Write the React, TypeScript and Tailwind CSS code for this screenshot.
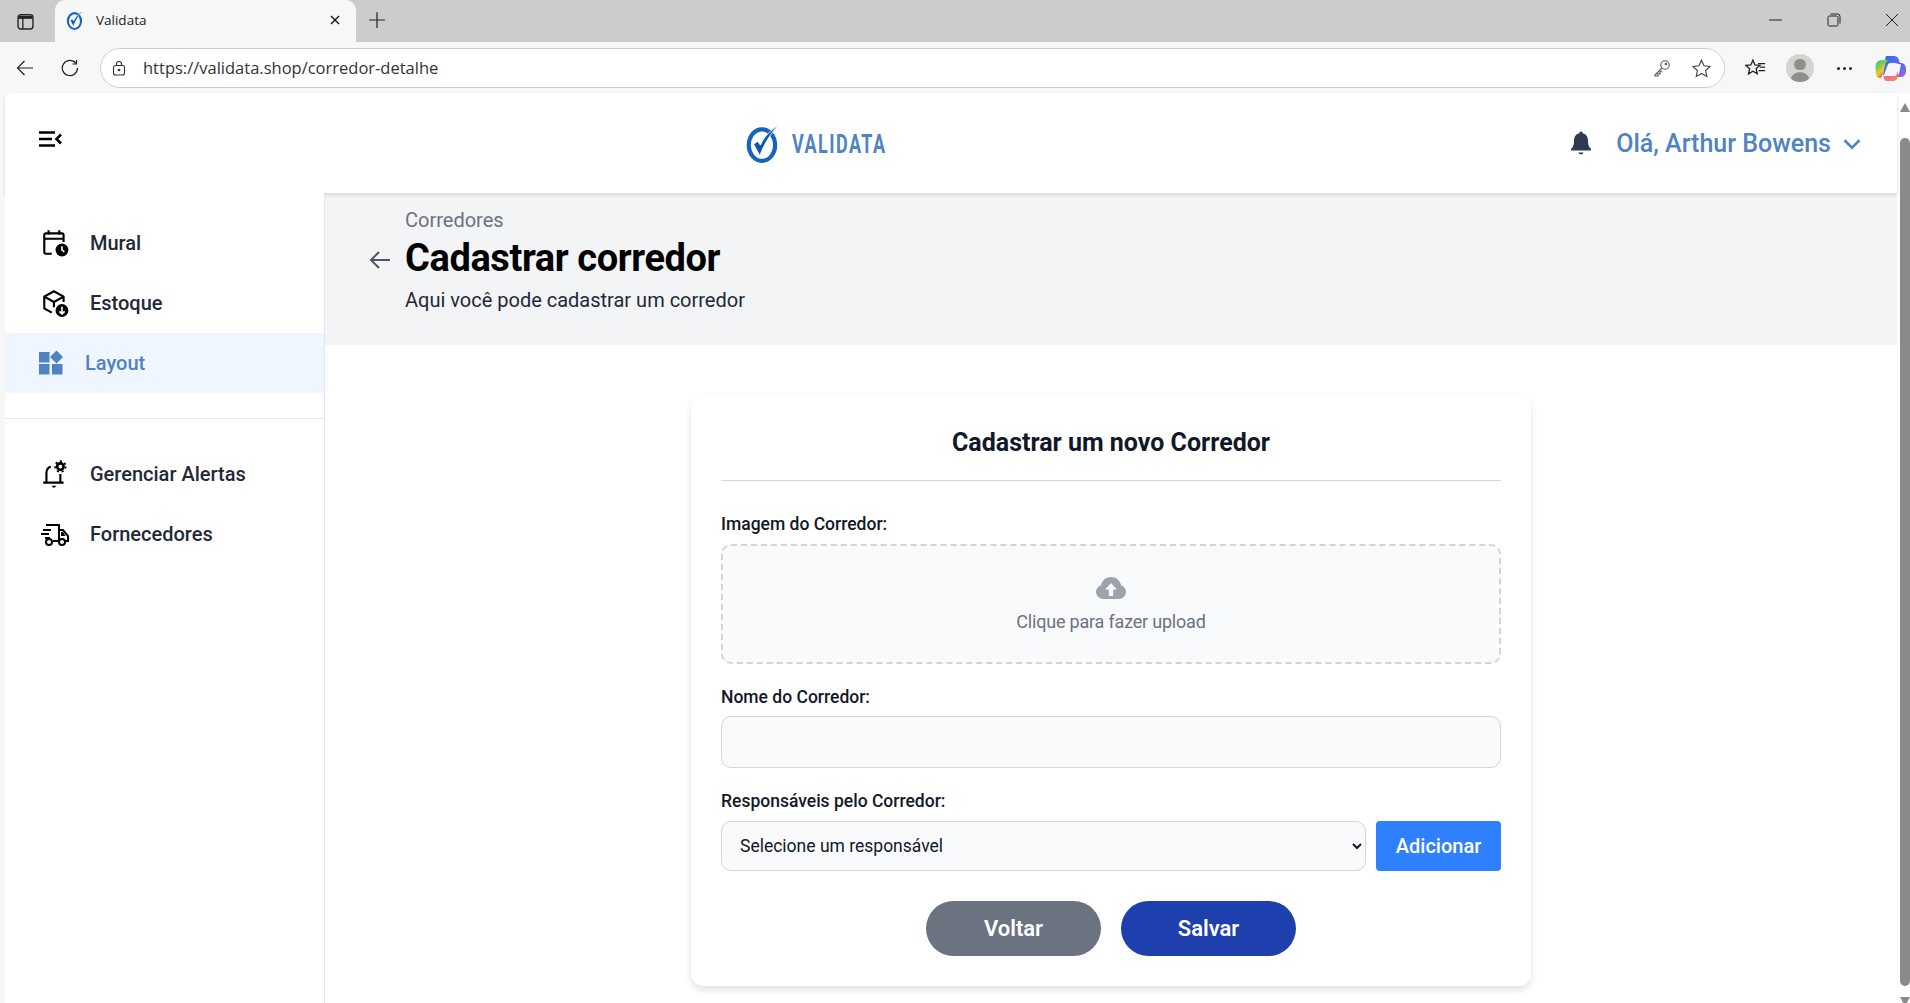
import React from "react";

const roboto = "font-['Roboto',sans-serif]";

const ValidataMark = ({ size }: { size: number }) => (
  <svg width={size} height={size} viewBox="0 0 32 38" fill="none">
    <ellipse cx="15" cy="21" rx="12.500" ry="15" stroke="#1565c0" strokeWidth="4" />
    <path d="M7 20l6 11C17 20 23 10 31 2 23 7 17 13 13.500 21l-2.500-3.500z" fill="#0d56ad" stroke="#fff" strokeWidth="0.8" />
  </svg>
);

const BrowserTabs = () => (
  <div className="h-[42px] bg-[#cccccc] flex items-end shrink-0">
    <div className="w-[50px] h-[42px] flex items-center justify-center">
      <svg width="17" height="17" viewBox="0 0 16 16" fill="none">
        <rect x="1" y="1.500" width="14" height="13.500" rx="2.500" stroke="#222" strokeWidth="1.300" />
        <path d="M1.500 4h13" stroke="#222" strokeWidth="3" />
        <path d="M5.500 4v11" stroke="#222" strokeWidth="1.200" />
      </svg>
    </div>
    <div className="ml-[5px] w-[301px] h-[42px] bg-[#f7f7f7] rounded-t-[10px] flex items-center pl-[10px] pr-[15px] pb-[2px]">
      <ValidataMark size={20} />
      <span className="ml-[11px] flex-1 text-[13.5px] text-[#222] font-['Open_Sans',sans-serif]">Validata</span>
      <svg width="12" height="12" viewBox="0 0 12 12" stroke="#111" strokeWidth="1.400">
        <path d="M2 2l8 8M10 2l-8 8" />
      </svg>
    </div>
    <div className="w-[42px] h-[42px] flex items-center justify-center pb-[2px]">
      <svg width="18" height="18" viewBox="0 0 16 16" stroke="#222" strokeWidth="1.100">
        <path d="M8 1v14M1 8h14" />
      </svg>
    </div>
    <div className="flex-1" />
    <div className="h-[42px] flex items-center pr-[11px] pb-[2px]">
      <svg width="14" height="14" viewBox="0 0 14 14" stroke="#222" strokeWidth="1">
        <path d="M0 7h13" />
      </svg>
      <svg className="ml-[44px]" width="14" height="14" viewBox="0 0 14 14" fill="none" stroke="#222" strokeWidth="1">
        <rect x="1" y="3" width="10" height="10" rx="1.500" />
        <path d="M3.500 1h7a2.500 2.500 0 0 1 2.500 2.500v7" />
      </svg>
      <svg className="ml-[44px]" width="14" height="14" viewBox="0 0 14 14" stroke="#222" strokeWidth="1">
        <path d="M1 1l12 12M13 1L1 13" />
      </svg>
    </div>
  </div>
);

const BrowserToolbar = () => (
  <div className="h-[51px] bg-[#f7f7f7] flex items-center shrink-0 pt-[1px]">
    <div className="w-[50px] flex justify-center">
      <svg width="18" height="18" viewBox="0 0 18 18" fill="none" stroke="#222" strokeWidth="1.200">
        <path d="M17 9H1.500M8.500 2l-7 7 7 7" />
      </svg>
    </div>
    <div className="w-[40px] flex justify-center">
      <svg width="18" height="18" viewBox="0 0 18 18" fill="none" stroke="#222" strokeWidth="1.200">
        <path d="M15 4.500A7.600 7.600 0 1 0 16.500 9" />
        <path d="M15.500 1v4h-4" />
      </svg>
    </div>
    <div className="ml-[10px] w-[1625px] shrink-0 h-[40px] rounded-full bg-white border border-[#cfcfcf] flex items-center pl-[11px] pr-[12px]">
      <svg width="14" height="16" viewBox="0 0 14 16" fill="none" stroke="#333" strokeWidth="1.100">
        <rect x="1.500" y="5.500" width="11" height="9.500" rx="2" />
        <path d="M4.500 5.500V4a2.500 2.500 0 0 1 5 0v1.500" />
        <circle cx="7" cy="10" r="0.800" fill="#333" />
      </svg>
      <span className="ml-[17px] flex-1 text-[16.5px] text-[#333] font-['Open_Sans',sans-serif]">
        https://validata.shop/corredor-detalhe
      </span>
      <svg width="18" height="18" viewBox="0 0 18 18" fill="none" stroke="#555" strokeWidth="1.100">
        <circle cx="12" cy="6" r="4.200" />
        <path d="M9 9l-7 7v1h3v-2h2v-2l2-1" />
        <circle cx="13" cy="5" r="0.700" fill="#555" />
      </svg>
      <svg className="ml-[20px]" width="21" height="21" viewBox="0 0 24 24" fill="none" stroke="#444" strokeWidth="1.300">
        <path d="M12 2.500l2.900 6.300 6.800.8-5 4.700 1.300 6.800L12 17.700l-6 3.400 1.300-6.800-5-4.700 6.800-.8z" />
      </svg>
    </div>
    <div className="w-[60px] flex justify-center shrink-0">
      <svg width="21" height="20" viewBox="0 0 24 22" fill="none" stroke="#222" strokeWidth="1.500">
        <path d="M9 2l2.300 5.500 5.700.5-4.300 3.800 1.300 5.700L9 14.600l-5 3 1.300-5.800L1 8l5.700-.5z" />
        <path d="M15 6h8M17 10h6M15.500 14H23" />
      </svg>
    </div>
    <div className="w-[28px] h-[28px] ml-[1px] shrink-0 rounded-full bg-[#d3d3d0] overflow-hidden flex flex-col items-center pt-[5px]">
      <div className="w-[12px] h-[12px] rounded-full bg-[#8f8f8c]" />
      <div className="w-[20px] h-[12px] mt-[2px] rounded-t-full bg-[#8f8f8c]" />
    </div>
    <div className="w-[61px] shrink-0 flex justify-center gap-[3px]">
      <div className="w-[3px] h-[3px] rounded-full bg-[#222]" />
      <div className="w-[3px] h-[3px] rounded-full bg-[#222]" />
      <div className="w-[3px] h-[3px] rounded-full bg-[#222]" />
    </div>
    <svg className="shrink-0" width="32" height="27" viewBox="0 0 32 27" fill="none">
      <defs>
        <linearGradient id="cpA" x1="0" y1="0" x2="1" y2="1">
          <stop offset="0" stopColor="#1b6fe0" />
          <stop offset="0.5" stopColor="#5a6cf0" />
          <stop offset="1" stopColor="#c85ad8" />
        </linearGradient>
        <linearGradient id="cpB" x1="0" y1="0" x2="0.6" y2="1">
          <stop offset="0" stopColor="#30b8d8" />
          <stop offset="0.35" stopColor="#6fd04a" />
          <stop offset="0.65" stopColor="#f6c52c" />
          <stop offset="1" stopColor="#f2553c" />
        </linearGradient>
        <linearGradient id="cpC" x1="0" y1="0" x2="1" y2="1">
          <stop offset="0" stopColor="#e85fc0" />
          <stop offset="1" stopColor="#f58a50" />
        </linearGradient>
      </defs>
      <path d="M11 1h8c2.500 0 4 1 5 4l1 3h-9c-2 0-3 .8-3.500 2.500L9 20H8l2-14c.3-2 .5-3.500 1-5z" fill="url(#cpA)" />
      <path d="M7 5h6c-1.500 1-2.500 3-3 5l-2.500 10c-.5 2-1 3-2.500 3-2.500 0-3.500-1.500-4-4.500L.5 12C.3 8 3 5 7 5z" fill="url(#cpB)" />
      <path d="M20 8h6c3 0 5 2.500 5 6v2c0 4-2.500 6-6 6h-4c2-1 3-3 3.500-5L26 9.500 20 8z" fill="url(#cpA)" />
      <path d="M8 21h11c1.500 0 2.500-1 3-3l.5-2 .5 4c0 3.500-2 6-5 6h-6c-2 0-3-1-3.500-5z" fill="url(#cpC)" />
    </svg>
  </div>
);

const MuralIcon = () => (
  <svg width="30" height="30" viewBox="0 0 28 28" fill="none" stroke="#000" strokeWidth="2">
    <path d="M11 24H5.500A1.500 1.500 0 0 1 4 22.500V6.500A1.500 1.500 0 0 1 5.500 5h15A1.500 1.500 0 0 1 22 6.500V13" />
    <path d="M8 2v4M18 2v4M4 10h18" />
    <circle cx="20.500" cy="20.500" r="6" fill="#000" stroke="none" />
    <path d="M20.500 17v3.500l2.200 1.800" stroke="#fff" strokeWidth="1.500" />
  </svg>
);

const EstoqueIcon = () => (
  <svg width="30" height="30" viewBox="0 0 28 28" fill="none" stroke="#000" strokeWidth="2">
    <path d="M11 23l-7-4V8l9-5 9 5v5" />
    <path d="M4 8l9 5 9-5M13 13v5" />
    <circle cx="20.500" cy="21" r="6" fill="#000" stroke="none" />
    <path d="M20.500 17.500v6.500M18 21.800l2.500 2.400 2.500-2.400" stroke="#fff" strokeWidth="1.500" />
  </svg>
);

const LayoutIcon = () => (
  <svg width="26" height="26" viewBox="0 0 26 26" fill="#4f83c2">
    <rect x="1" y="2" width="10.500" height="10.500" />
    <rect x="1" y="14" width="10.500" height="10.500" />
    <rect x="14" y="14" width="10.500" height="10.500" />
    <path d="M18.500 0.500l6.500 6.500-6.500 6.500-6.500-6.500z" />
  </svg>
);

const AlertIcon = () => (
  <svg width="30" height="30" viewBox="0 0 28 28" fill="none" stroke="#000" strokeWidth="2">
    <path d="M3 22h19M6 22v-9c0-3 1.500-5 4-6M19 22v-8" />
    <path d="M10.500 25h5l-2.500 2z" fill="#000" stroke="none" />
    <circle cx="19" cy="7" r="3" strokeWidth="2.500" />
    <circle cx="19" cy="7" r="5" strokeWidth="1.500" strokeDasharray="2 2.500" />
  </svg>
);

const TruckIcon = () => (
  <svg width="30" height="28" viewBox="0 0 30 28" fill="none" stroke="#000" strokeWidth="2">
    <path d="M6 5h13v16h-6M3 10h8M1 14h8M5 18h5" />
    <path d="M19 10h4l5 6v5h-3" />
    <circle cx="9" cy="22" r="3" />
    <circle cx="22" cy="22" r="3" />
    <path d="M21 12h2l2.500 4H21z" fill="#000" stroke="none" />
  </svg>
);

interface NavItem {
  label: string;
  icon: React.ReactNode;
}

const topNav: NavItem[] = [
  { label: "Mural", icon: <MuralIcon /> },
  { label: "Estoque", icon: <EstoqueIcon /> },
];

const bottomNav: NavItem[] = [
  { label: "Gerenciar Alertas", icon: <AlertIcon /> },
  { label: "Fornecedores", icon: <TruckIcon /> },
];

const NavRow = ({ item }: { item: NavItem }) => (
  <div className="h-[60px] flex items-center pl-[35px]">
    <div className="w-[30px] flex justify-center">{item.icon}</div>
    <span className="ml-[20px] text-[20px] font-medium text-[#1f2937]">{item.label}</span>
  </div>
);

const Sidebar = () => (
  <aside className="relative z-20 w-[320px] shrink-0 bg-white border-r border-[#e5e7eb] pt-[20px]">
    {topNav.map((item) => (
      <NavRow key={item.label} item={item} />
    ))}
    <div className="h-[60px] bg-[#eff6ff] flex items-center pl-[33px]">
      <LayoutIcon />
      <span className="ml-[21px] text-[20px] font-medium text-[#4f83c2]">Layout</span>
    </div>
    <div className="mt-[25px] mb-[25px] border-t border-[#e5e7eb]" />
    {bottomNav.map((item) => (
      <NavRow key={item.label} item={item} />
    ))}
  </aside>
);

const TopBar = () => (
  <header className="relative z-10 h-[100px] bg-white shadow-[0_2px_4px_rgba(0,0,0,0.12)] flex items-center shrink-0 rounded-tl-[8px]">
    <div className="w-[320px] shrink-0 pl-[32px] pb-[8px]">
      <svg width="26" height="26" viewBox="0 0 26 26" fill="none" stroke="#000" strokeWidth="2.600">
        <path d="M2 6.500h16M2 13h13M2 19.500h16M24 8.500L19.500 13l4.500 4.500" />
      </svg>
    </div>
    <div className="flex items-center pl-[418px]">
      <ValidataMark size={40} />
      <span className="ml-[9px] mt-[3px] w-[100px] text-[25px] font-bold tracking-[2px] text-[#4f83c2] scale-x-[0.72] origin-left whitespace-nowrap">
        VALIDATA
      </span>
    </div>
    <div className="flex-1 flex items-center justify-end pr-[35px] pt-[2px]">
      <svg className="mb-[2px]" width="24" height="26" viewBox="0 0 24 26" fill="#2f3b52">
        <path d="M12 1.500c1 0 1.600.7 1.700 1.800 3.700.8 5.300 3.900 5.300 7.700 0 4 .9 6 3 8v1.500H2V19c2.100-2 3-4 3-8 0-3.800 1.600-6.900 5.300-7.700.1-1.100.7-1.800 1.700-1.800z" />
        <path d="M9.500 22.500h5c-.3 1.300-1.200 2-2.500 2s-2.200-.7-2.500-2z" />
      </svg>
      <span className="ml-[23px] text-[25px] font-medium text-[#4f83c2]">Olá, Arthur Bowens</span>
      <svg className="ml-[11px]" width="20" height="20" viewBox="0 0 16 16" fill="none" stroke="#4f83c2" strokeWidth="2">
        <path d="M2 5l6 6 6-6" />
      </svg>
    </div>
  </header>
);

const PageHeading = () => (
  <div className="h-[152px] bg-[#f3f4f6] flex items-center pl-[44px] pb-[18px]">
    <svg width="22" height="22" viewBox="0 0 22 22" fill="none" stroke="#4b5563" strokeWidth="2">
      <path d="M21 11H2M10 3l-8 8 8 8" />
    </svg>
    <div className="ml-[14px]">
      <p className="text-[20px] leading-[28px] text-[#6b7280]">Corredores</p>
      <h1 className="text-[38px] leading-[40px] font-bold tracking-[-0.4px] text-black mt-[4px]">
        Cadastrar corredor
      </h1>
      <p className="text-[20px] leading-[28px] text-[#1f2937] mt-[8px]">Aqui você pode cadastrar um corredor</p>
    </div>
  </div>
);

const Form = () => (
  <div className="w-[840px] mx-auto mt-[50px] bg-white rounded-[12px] shadow-[0_4px_8px_-1px_rgba(0,0,0,0.14)] px-[30px] pt-[32px] pb-[30px]">
    <h2 className="text-[25px] leading-[32px] font-bold text-[#111827] text-center pb-[21px] border-b border-[#d1d5db]">
      Cadastrar um novo Corredor
    </h2>
    <label className="block mt-[31px] text-[17.5px] leading-[24px] font-medium text-[#111827]">Imagem do Corredor:</label>
    <div className="mt-[8px] h-[120px] rounded-[10px] border-2 border-dashed border-[#d1d5db] bg-[#f9fafb] flex flex-col items-center justify-center pt-[4px]">
      <svg width="32" height="24" viewBox="0 0 32 24">
        <path d="M8 23a7 7 0 0 1-2-13.700C7 4.500 11 1 16 1s9 3.500 10 8.300A7 7 0 0 1 24 23z" fill="#9ca3af" />
        <path d="M16 7l-6 6.500h3.800V20h4.400v-6.500H22z" fill="#f9fafb" />
      </svg>
      <span className="mt-[8px] text-[18px] leading-[28px] text-[#6b7280] tracking-[-0.2px]">Clique para fazer upload</span>
    </div>
    <label className="block mt-[21px] text-[17.5px] leading-[24px] font-medium text-[#111827]">Nome do Corredor:</label>
    <input className="block mt-[7px] w-full h-[52px] rounded-[10px] border border-[#d1d5db] bg-[#f9fafb]" />
    <label className="block mt-[21px] text-[17.5px] leading-[24px] font-medium text-[#111827]">Responsáveis pelo Corredor:</label>
    <div className="mt-[8px] flex gap-[10px]">
      <select className={`flex-1 h-[50px] rounded-[10px] border border-[#d1d5db] bg-[#f9fafb] pl-[14px] text-[17.5px] text-[#111827] ${roboto}`}>
        <option>Selecione um responsável</option>
      </select>
      <button className="w-[125px] h-[50px] rounded-[4px] bg-[#2f80ff] text-[20px] font-medium text-white">Adicionar</button>
    </div>
    <div className="mt-[30px] flex justify-center gap-[20px]">
      <button className="w-[175px] h-[55px] rounded-full bg-[#6b7280] text-[22px] font-semibold text-white">Voltar</button>
      <button className="w-[175px] h-[55px] rounded-full bg-[#1e40af] text-[22px] font-semibold text-white">Salvar</button>
    </div>
  </div>
);

const Scrollbar = () => (
  <div className="w-[13px] shrink-0 bg-white flex flex-col items-end pt-[10px] overflow-hidden">
    <div className="w-0 h-0 border-x-[5px] border-x-transparent border-b-[9px] border-b-[#8a8a8a] shrink-0" />
    <div className="mt-[26px] w-[10px] h-[848px] rounded-l-full rounded-r-full bg-[#8a8a8a] shrink-0" />
    <div className="mt-[11px] w-0 h-0 border-x-[5px] border-x-transparent border-t-[9px] border-t-[#8a8a8a] shrink-0" />
  </div>
);

export default function App() {
  return (
    <div className={`h-[1003px] w-[1910px] overflow-hidden flex flex-col bg-[#f7f7f7] ${roboto}`}>
      <BrowserTabs />
      <BrowserToolbar />
      <div className="flex-1 min-h-0 flex pl-[5px]">
        <div className="flex-1 min-w-0 flex flex-col">
          <TopBar />
          <div className="flex-1 min-h-0 flex bg-white">
            <Sidebar />
            <main className="flex-1 min-w-0 overflow-hidden">
              <PageHeading />
              <Form />
            </main>
          </div>
        </div>
        <Scrollbar />
      </div>
    </div>
  );
}
